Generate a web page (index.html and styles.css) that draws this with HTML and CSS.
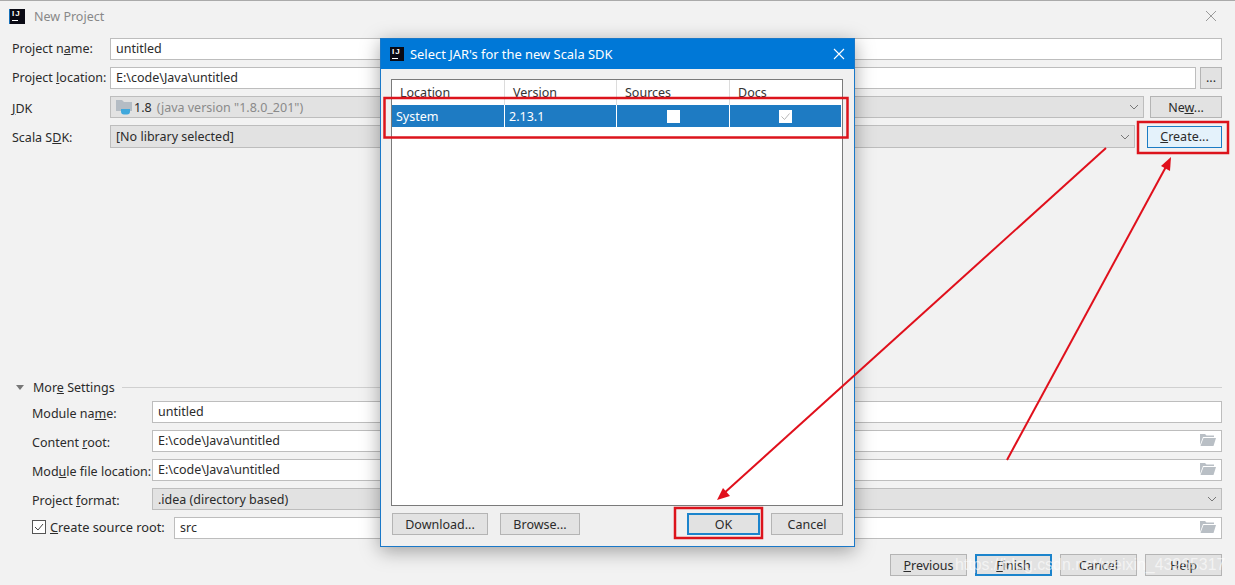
FILE: index.html
```html
<!DOCTYPE html>
<html lang="en">
<head>
  <meta charset="UTF-8" />
  <title>New Project</title>
  <link rel="stylesheet" href="styles.css">
</head>
<body>

  <div class="window">
    <div class="title-bar">
      <span class="ij-logo">IJ</span>
      <span class="title-text">New Project</span>
      <svg class="close-icon" width="12" height="12" viewBox="0 0 12 12"><path d="M1 1L11 11M11 1L1 11" stroke="#9a9a9a" fill="none"/></svg>
    </div>

    <div class="form">
      <div class="row">
        <label class="label label-up">Project n<u>a</u>me:</label>
        <div class="field">untitled</div>
      </div>
      <div class="row">
        <label class="label label-up">Project <u>l</u>ocation:</label>
        <div class="field">E:\code\Java\untitled</div>
        <button class="btn btn-dots">...</button>
      </div>
      <div class="row">
        <label class="label label-down"><u>J</u>DK</label>
        <div class="field select">
          <svg class="jdk-icon" width="16" height="16" viewBox="0 0 16 16"><path d="M0 1h6l2 2h8v9H0z" fill="#b4bcc4"/><path d="M5 10h9v2.5a3 3 0 0 1-3 3H8a3 3 0 0 1-3-3z" fill="#40a8dc"/></svg>
          <span>1.8</span><span class="muted">(java version "1.8.0_201")</span>
          <svg class="chevron" width="10" height="6" viewBox="0 0 10 6"><path d="M1 1l4 4 4-4" stroke="#777" fill="none"/></svg>
        </div>
        <button class="btn btn-new">Ne<u>w</u>...</button>
      </div>
      <div class="row row-scala">
        <label class="label label-down">Scala S<u>D</u>K:</label>
        <div class="field select">
          <span>[No library selected]</span>
          <svg class="chevron" width="10" height="6" viewBox="0 0 10 6"><path d="M1 1l4 4 4-4" stroke="#777" fill="none"/></svg>
        </div>
        <button class="btn btn-create"><u>C</u>reate...</button>
      </div>
    </div>

    <div class="more">
      <div class="more-head">
        <span class="triangle"></span>
        <span>Mor<u>e</u> Settings</span>
        <span class="more-line"></span>
      </div>
      <div class="row">
        <label class="label label-wide">Module na<u>m</u>e:</label>
        <div class="field">untitled</div>
      </div>
      <div class="row">
        <label class="label label-wide">Content <u>r</u>oot:</label>
        <div class="field">E:\code\Java\untitled
          <svg class="folder" width="16" height="12" viewBox="0 0 16 12"><path d="M0 0h5l1.500 1.500H14V3H3L0 11zM3.500 4H16l-2.500 8H0.500z" fill="#b9bfc5"/></svg>
        </div>
      </div>
      <div class="row">
        <label class="label label-wide">Mod<u>u</u>le file location:</label>
        <div class="field">E:\code\Java\untitled
          <svg class="folder" width="16" height="12" viewBox="0 0 16 12"><path d="M0 0h5l1.500 1.500H14V3H3L0 11zM3.500 4H16l-2.500 8H0.500z" fill="#b9bfc5"/></svg>
        </div>
      </div>
      <div class="row">
        <label class="label label-wide label-format">Project <u>f</u>ormat:</label>
        <div class="field select">
          <span>.idea (directory based)</span>
          <svg class="chevron" width="10" height="6" viewBox="0 0 10 6"><path d="M1 1l4 4 4-4" stroke="#777" fill="none"/></svg>
        </div>
      </div>
      <div class="row">
        <label class="label label-check">
          <span class="checkbox"><svg width="12" height="12" viewBox="0 0 12 12"><path d="M2 6l3 3 5-6" stroke="#444" fill="none"/></svg></span>
          <span class="check-text"><u>C</u>reate source root:</span>
        </label>
        <div class="field">src
          <svg class="folder" width="16" height="12" viewBox="0 0 16 12"><path d="M0 0h5l1.500 1.500H14V3H3L0 11zM3.500 4H16l-2.500 8H0.500z" fill="#b9bfc5"/></svg>
        </div>
      </div>
    </div>

    <div class="footer">
      <button class="btn btn-foot"><u>P</u>revious</button>
      <button class="btn btn-foot btn-default"><u>F</u>inish</button>
      <button class="btn btn-foot">Cancel</button>
      <button class="btn btn-foot">Help</button>
    </div>
  </div>

  <div class="dialog">
    <div class="dialog-title">
      <span class="ij-logo ij-small">IJ</span>
      <span class="dialog-title-text">Select JAR's for the new Scala SDK</span>
      <svg class="dialog-close" width="12" height="12" viewBox="0 0 12 12"><path d="M1 1L11 11M11 1L1 11" stroke="#fff" stroke-width="1.100" fill="none"/></svg>
    </div>
    <div class="dialog-body">
      <div class="table">
        <div class="table-row table-head">
          <div class="cell"><span class="head-text">Location</span></div>
          <div class="cell"><span class="head-text">Version</span></div>
          <div class="cell"><span class="head-text">Sources</span></div>
          <div class="cell"><span class="head-text">Docs</span></div>
        </div>
        <div class="table-row table-selected">
          <div class="cell">System</div>
          <div class="cell">2.13.1</div>
          <div class="cell cell-center"><span class="table-check"></span></div>
          <div class="cell cell-center">
            <span class="table-check"><svg width="13" height="13" viewBox="0 0 13 13"><path d="M2.500 6.500l3 3 5-6" stroke="#b8b8b8" fill="none"/></svg></span>
          </div>
        </div>
      </div>
      <div class="dialog-actions">
        <button class="btn btn-download">Download...</button>
        <button class="btn btn-browse">Browse...</button>
        <button class="btn btn-ok btn-default">OK</button>
        <button class="btn btn-cancel">Cancel</button>
      </div>
    </div>
  </div>

  <svg class="marks" width="1235" height="585" viewBox="0 0 1235 585">
    <g fill="none" stroke="#dc141c" stroke-width="2.500">
      <rect x="384.500" y="98" width="463" height="39.500"/>
      <rect x="1138" y="122" width="90" height="31"/>
      <rect x="675" y="508" width="87" height="30"/>
    </g>
    <g fill="none" stroke="#e0101c" stroke-width="2">
      <path d="M1106 148L722 495"/>
      <path d="M1007 460L1168 163"/>
    </g>
    <path d="M717 500L723 488L730 496z" fill="#e0101c"/>
    <path d="M1171 157L1170 171L1161 166z" fill="#e0101c"/>
  </svg>

  <div class="watermark">https://blog.csdn.net/weixin_43965317</div>

</body>
</html>
```

FILE: styles.css
```css
html, body {
  margin: 0;
  padding: 0;
  height: 100%;
  overflow: hidden;
  background: #f2f2f2;
  color: #2b2b2b;
  font-family: 'Noto Sans', sans-serif;
  font-size: 12.5px;
}

.window {
  height: 585px;
  box-sizing: border-box;
  border-top: 1px solid #aaaaaa;
  padding: 0 13px 9px 12px;
  display: flex;
  flex-direction: column;
}

.title-bar {
  height: 37px;
  display: flex;
  align-items: center;
  padding-bottom: 7px;
  box-sizing: border-box;
  color: #888;
  font-size: 12.5px;
}

.ij-logo {
  width: 16px;
  height: 15px;
  margin-left: -3px;
  margin-right: 9px;
  background: #0a0a14;
  border-left: 1px solid #1670b8;
  color: #fff;
  font-family: 'Liberation Sans', sans-serif;
  font-size: 8px;
  font-weight: bold;
  letter-spacing: 1px;
  line-height: 10px;
  padding-left: 2px;
  box-sizing: border-box;
}

.ij-logo::after {
  content: "";
  display: block;
  width: 6px;
  height: 1px;
  margin-top: 1px;
  background: #fff;
}

.ij-small {
  width: 14px;
  height: 14px;
  margin: 0 6px 0 0;
  border: none;
}

.dialog-title-text {
  font-size: 12.9px;
}

.close-icon {
  margin-left: auto;
  margin-right: 5px;
}

.form {
  display: flex;
  flex-direction: column;
  gap: 7px;
}

.row {
  display: flex;
  align-items: center;
  height: 22px;
}

.row-scala {
  height: 23px;
}

.label {
  width: 98px;
  flex: none;
  white-space: nowrap;
  box-sizing: border-box;
}

.label-up {
  padding-bottom: 2px;
}

.label-down {
  padding-top: 2px;
}

.field {
  flex: 1;
  height: 100%;
  box-sizing: border-box;
  border: 1px solid #bdbdbd;
  background: #fff;
  padding: 0 5px 2px;
  display: flex;
  align-items: center;
  white-space: nowrap;
}

.select {
  background: #e2e2e2;
  padding-bottom: 0;
}

.muted {
  color: #8a8a8a;
  margin-left: 5px;
}

.jdk-icon {
  margin-right: 2px;
}

.chevron {
  margin-left: auto;
  margin-right: -1px;
}

.folder {
  margin-left: auto;
  margin-right: 0;
}

.btn {
  height: 22px;
  box-sizing: border-box;
  border: 1px solid #b4b4b4;
  background: #e2e2e2;
  color: #2b2b2b;
  font-family: inherit;
  font-size: 12.5px;
  padding: 0;
  flex: none;
}

.btn-dots {
  width: 22px;
  margin-left: 4px;
  line-height: 20px;
}

.btn-new {
  width: 72px;
  margin-left: 6px;
}

.btn-create {
  width: 75px;
  margin-left: 12px;
  background: #e4f2fb;
  border-color: #1c7cc4;
}

.btn-default {
  border: 2px solid #1c84cc;
}

.more {
  margin-top: auto;
  display: flex;
  flex-direction: column;
  gap: 7px;
  padding-left: 20px;
}

.more-head {
  display: flex;
  align-items: center;
  gap: 7px;
  height: 16px;
  margin-left: -16px;
  margin-bottom: -1px;
}

.triangle {
  width: 0;
  height: 0;
  margin-right: 2px;
  border-left: 4px solid transparent;
  border-right: 4px solid transparent;
  border-top: 5px solid #777;
}

.more-line {
  flex: 1;
  height: 1px;
  background: #d0d0d0;
}

.label-wide {
  width: 120px;
  padding-top: 3px;
}

.label-format {
  padding-top: 2px;
}

.label-check {
  width: 142px;
  display: flex;
  align-items: center;
  gap: 4px;
  padding-bottom: 2px;
}

.checkbox {
  width: 14px;
  height: 14px;
  flex: none;
  border: 1px solid #555;
  box-sizing: border-box;
  display: flex;
  align-items: center;
  justify-content: center;
  background: #fff;
  overflow: hidden;
}

.check-text {
  font-size: 12.8px;
}

.footer {
  display: flex;
  justify-content: flex-end;
  gap: 8px;
  margin-top: 15px;
}

.btn-foot {
  width: 77px;
}

.dialog {
  position: absolute;
  left: 380px;
  top: 38px;
  width: 475px;
  height: 509px;
  box-sizing: border-box;
  border: 1px solid #1a78c8;
  background: #f0f0f0;
  box-shadow: 0 4px 18px rgba(0, 0, 0, 0.35);
  display: flex;
  flex-direction: column;
}

.dialog-title {
  height: 30px;
  flex: none;
  background: #0078d7;
  color: #fff;
  font-size: 13px;
  display: flex;
  align-items: center;
  padding-left: 9px;
}

.dialog-close {
  margin-left: auto;
  margin-right: 9px;
}

.dialog-body {
  flex: 1;
  display: flex;
  flex-direction: column;
  padding: 10px 11px 11px 10px;
  min-height: 0;
}

.table {
  flex: 1;
  background: #fff;
  border: 1px solid #7a7a7a;
  box-sizing: border-box;
}

.table-row {
  display: grid;
  grid-template-columns: 113px 112px 113px 112px;
}

.table-head {
  height: 25px;
}

.table-head .cell {
  border-right: 1px solid #dcdcdc;
  align-items: flex-start;
}

.table-head .cell:last-child {
  border-right: none;
}

.head-text {
  display: block;
  height: 17px;
  line-height: 26px;
  overflow: hidden;
  padding-left: 4px;
  color: #333;
}

.table-selected {
  height: 22px;
  background: #1e7bc3;
  color: #fff;
}

.cell {
  display: flex;
  align-items: center;
  padding-left: 4px;
  box-sizing: border-box;
  border-right: 1px solid #fff;
}

.cell-center {
  justify-content: center;
  padding-left: 0;
}

.table-check {
  width: 13px;
  height: 13px;
  background: #fff;
  display: block;
}

.table-check svg {
  display: block;
}

.dialog-actions {
  display: flex;
  margin-top: 7px;
  padding-left: 1px;
}

.btn-download {
  width: 96px;
  margin-right: 12px;
}

.btn-browse {
  width: 80px;
}

.btn-ok {
  width: 73px;
  margin-left: auto;
  margin-right: 11px;
}

.btn-cancel {
  width: 72px;
}

.marks {
  position: absolute;
  left: 0;
  top: 0;
}

.watermark {
  position: absolute;
  left: 955px;
  top: 556px;
  color: rgba(255, 255, 255, 0.6);
  font-family: 'Liberation Sans', sans-serif;
  font-size: 15.9px;
  white-space: nowrap;
}
```
